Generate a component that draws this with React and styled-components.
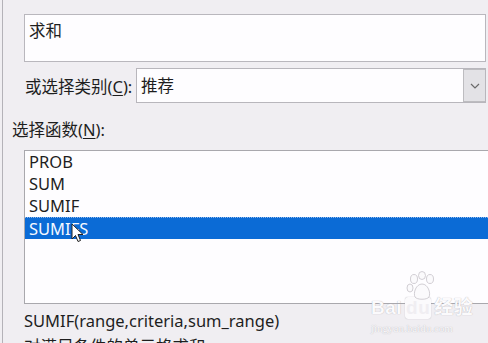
import React from 'react';
import styled, { createGlobalStyle } from 'styled-components';

const GlobalStyle = createGlobalStyle`
  html, body {
    margin: 0;
    padding: 0;
    background: #f0eef2;
    overflow: hidden;
  }
  body {
    font-family: "Noto Sans", "Noto Sans CJK SC", sans-serif;
    color: #1e1e1e;
  }
`;

const functions = ['PROB', 'SUM', 'SUMIF', 'SUMIFS'];

const App = () => {
  return (
    <>
      <GlobalStyle />
      <Dialog>
        <TopLabel>
          搜索函数(<u>S</u>):
        </TopLabel>
        <SearchBox>求和</SearchBox>

        <CategoryRow>
          <Label>
            或选择类别(<u>C</u>):
          </Label>
          <Select>
            <span>推荐</span>
            <Arrow>
              <svg width="10" height="6" viewBox="0 0 10 6">
                <path d="M1 1 L5 5 L9 1" fill="none" stroke="#6a6a6a" strokeWidth="1.2" />
              </svg>
            </Arrow>
          </Select>
        </CategoryRow>

        <SectionLabel>
          选择函数(<u>N</u>):
        </SectionLabel>

        <ListBox>
          {functions.map((name) => (
            <Item key={name} selected={name === 'SUMIFS'}>
              {name}
            </Item>
          ))}
          <Cursor width="14" height="20" viewBox="0 0 14 20">
            <path
              d="M1 1 L1 16 L4.5 12.5 L7 18.5 L9.5 17.5 L7 11.5 L12 11.5 Z"
              fill="#fff"
              stroke="#222"
              strokeWidth="1"
              strokeLinejoin="round"
            />
          </Cursor>
        </ListBox>

        <Signature>SUMIF(range,criteria,sum_range)</Signature>
        <Description>对满足条件的单元格求和</Description>

        <Watermark>
          <Paw width="34" height="30" viewBox="0 0 34 30">
            <ellipse cx="9" cy="8" rx="3.5" ry="4.5" />
            <ellipse cx="17" cy="4.5" rx="3.5" ry="4" />
            <ellipse cx="25" cy="8" rx="3.5" ry="4.5" />
            <ellipse cx="5" cy="17" rx="3" ry="4" />
            <path d="M17 13 C11 13 8 22 10 26 C12 29 22 29 24 26 C26 22 23 13 17 13 Z" />
          </Paw>
          <Brand>
            Bai<Du>du</Du>经验
          </Brand>
          <Site>jingyan.baidu.com</Site>
        </Watermark>
      </Dialog>
    </>
  );
};

const Dialog = styled.div`
  position: relative;
  height: 343px;
  margin-left: 2px;
  border-left: 1px solid #b4b2b8;
  padding-left: 9px;
  overflow: hidden;
  font-size: 16.5px;

  u {
    text-decoration: underline;
    text-underline-offset: 2px;
  }
`;

const TopLabel = styled.div`
  height: 14px;
  margin-top: -16px;
  line-height: 14px;
  white-space: nowrap;
`;

const SearchBox = styled.div`
  margin-left: 12px;
  margin-top: 16px;
  width: 462px;
  height: 48px;
  background: #fefdff;
  border: 1px solid #b9b7bd;
  padding: 6px 4px;
  box-sizing: border-box;
  line-height: 20px;
`;

const CategoryRow = styled.div`
  display: flex;
  align-items: center;
  margin-top: 6px;
  margin-left: 13px;
  height: 35px;
`;

const Label = styled.div`
  width: 111px;
  white-space: nowrap;
`;

const Select = styled.div`
  display: flex;
  align-items: center;
  justify-content: space-between;
  width: 350px;
  height: 35px;
  box-sizing: border-box;
  background: #fefdff;
  border: 1px solid #b8b6bc;
  padding-left: 4px;

  span {
    line-height: 20px;
  }
`;

const Arrow = styled.div`
  display: flex;
  align-items: center;
  justify-content: center;
  width: 22px;
  height: 100%;
  box-sizing: border-box;
  background: #e3e2e6;
  border: 1px solid #bdbcc0;
  border-right: none;
`;

const SectionLabel = styled.div`
  margin-top: 17px;
  line-height: 20px;
  white-space: nowrap;
`;

const ListBox = styled.div`
  position: relative;
  margin-top: 10px;
  margin-left: 12px;
  width: 470px;
  height: 154px;
  box-sizing: border-box;
  background: #fefdff;
  border: 1px solid #a9a8ad;
  border-right: none;
`;

const Item = styled.div`
  height: 22px;
  line-height: 22px;
  padding-left: 4px;
  background: ${(p) => (p.selected ? '#0b6bd6' : 'transparent')};
  color: ${(p) => (p.selected ? '#f4f8ff' : '#1e1e1e')};
  border-top: ${(p) => (p.selected ? '1px dotted #8fb9ec' : 'none')};
  box-sizing: border-box;
`;

const Cursor = styled.svg`
  position: absolute;
  left: 46px;
  top: 72px;
`;

const Signature = styled.div`
  margin-top: 6px;
  margin-left: 12px;
  line-height: 22px;
  white-space: nowrap;
`;

const Description = styled.div`
  margin-top: 5px;
  margin-left: 12px;
  line-height: 20px;
  white-space: nowrap;
`;

const Watermark = styled.div`
  position: absolute;
  left: 368px;
  top: 297px;
  width: 110px;
  display: flex;
  flex-direction: column;
  align-items: flex-start;
  color: #fbfafc;
  text-shadow: 0 0 1px #a9a6ad;
  pointer-events: none;
`;

const Paw = styled.svg`
  position: absolute;
  left: 34px;
  top: -26px;
  fill: #fbfafc;
  stroke: #c6c3c9;
  stroke-width: 0.8;
`;

const Brand = styled.div`
  font-family: "Liberation Sans", "Noto Sans CJK SC", sans-serif;
  font-weight: bold;
  font-size: 19px;
  line-height: 22px;
  letter-spacing: 0.5px;
`;

const Du = styled.span`
  display: inline-block;
  background: #fbfafc;
  color: #f0eef2;
  border-radius: 3px;
  padding: 0 1px;
  margin: 0 3px;
  box-shadow: 0 0 1px #a9a6ad;
  text-shadow: none;
`;

const Site = styled.div`
  font-family: "Liberation Serif", serif;
  font-size: 11px;
  line-height: 14px;
  margin-top: 2px;
`;

export default App;
